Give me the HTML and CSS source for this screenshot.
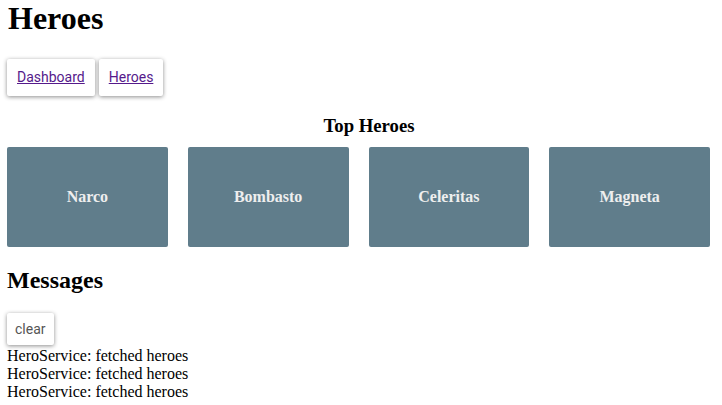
FILE: index.html
```html
<!DOCTYPE html>
<html lang="en">
<head>
  <meta charset="UTF-8">
  <title>Tour of Heroes</title>
  <link rel="stylesheet" href="styles.css">
</head>
<body>

  <h1>Heroes</h1>

  <nav class="nav">
    <a class="nav-btn" href="#dashboard">Dashboard</a>
    <a class="nav-btn" href="#heroes">Heroes</a>
  </nav>

  <h3 class="top-title">Top Heroes</h3>
  <div class="hero-grid">
    <a class="hero-card" href="#11">Narco</a>
    <a class="hero-card" href="#12">Bombasto</a>
    <a class="hero-card" href="#13">Celeritas</a>
    <a class="hero-card" href="#14">Magneta</a>
  </div>

  <div class="messages">
    <h2>Messages</h2>
    <button class="clear-btn">clear</button>
    <div>HeroService: fetched heroes</div>
    <div>HeroService: fetched heroes</div>
    <div>HeroService: fetched heroes</div>
  </div>

</body>
</html>
```

FILE: styles.css
```css
body {
  margin: 0;
  padding: 0 7px;
  font-family: "Liberation Serif", serif;
  font-size: 16px;
  color: #000;
  background: #fff;
}

h1 {
  font-size: 32px;
  margin: 0;
  padding-left: 1px;
}

.nav {
  display: flex;
  gap: 4px;
  margin-top: 22px;
}

.nav-btn {
  display: inline-block;
  padding: 10px 10px;
  line-height: 17px;
  font-family: Roboto, sans-serif;
  font-size: 14px;
  color: #551a8b;
  background: #fff;
  border-radius: 2px;
  box-shadow: 0 1px 4px rgba(0, 0, 0, 0.45);
}

.top-title {
  font-size: 18.72px;
  text-align: center;
  margin: 19px 0 10px;
  padding-left: 16px;
}

.hero-grid {
  display: grid;
  width: 703px;
  grid-template-columns: repeat(4, 1fr);
  column-gap: 20px;
}

.hero-card {
  display: flex;
  align-items: center;
  justify-content: center;
  height: 100px;
  background: #607d8b;
  border-radius: 2px;
  color: #eee;
  font-weight: bold;
  font-size: 16px;
  text-decoration: none;
}

.messages h2 {
  font-size: 24px;
  margin: 20px 0 19px;
}

.clear-btn {
  display: block;
  font-family: Roboto, sans-serif;
  font-size: 14px;
  color: #555;
  background: #fff;
  border: none;
  border-radius: 2px;
  padding: 7px 8px;
  line-height: 18px;
  margin-bottom: 2px;
  box-shadow: 0 1px 4px rgba(0, 0, 0, 0.45);
}
```
